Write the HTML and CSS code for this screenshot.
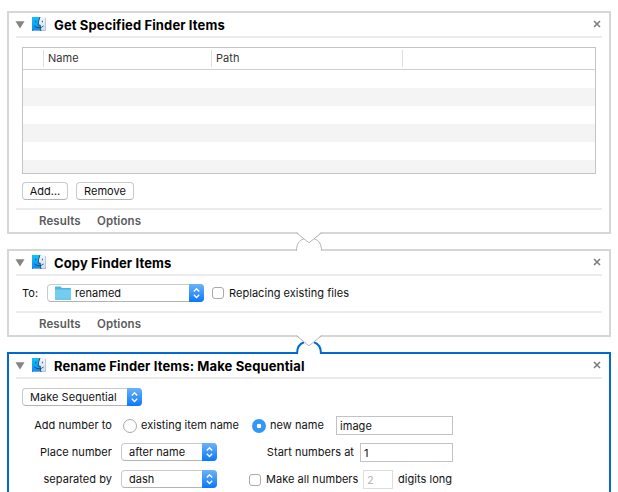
FILE: index.html
```
<!DOCTYPE html>
<html lang="en">
<head>
<meta charset="utf-8">
<title>Workflow</title>
<link rel="stylesheet" href="styles.css">
</head>
<body>
<svg class="defs" width="0" height="0" aria-hidden="true">
  <defs>
    <linearGradient id="face" x1="0" y1="0" x2="0" y2="1"><stop offset="0" stop-color="#10c4fb"/><stop offset="1" stop-color="#1188f0"/></linearGradient>
    <linearGradient id="pale" x1="0" y1="0" x2="0" y2="1"><stop offset="0" stop-color="#f2f5f9"/><stop offset="1" stop-color="#cfdeee"/></linearGradient>
    <symbol id="finder" viewBox="0 0 14 14">
      <rect width="14" height="14" rx=".6" fill="url(#pale)"/>
      <path d="M0 0H8Q6.3 4 6.2 8H8.2Q8.2 11 9 14H0Z" fill="url(#face)"/>
      <path d="M13.5 1V13.5H1" fill="none" stroke="#a9b9cb" stroke-width=".7"/>
      <path d="M8 0Q6.3 4 6.2 8H8.2Q8.2 11 9 14M3.7 3.7V5.3M10.4 3.7V5.3M2.4 9Q7 12.6 11.6 9" fill="none" stroke="#123b65" stroke-width=".8"/>
    </symbol>
    <symbol id="triangle" viewBox="0 0 10 8"><path d="M.5 .2H9.5L5 7.6Z" fill="#858585"/></symbol>
    <symbol id="close" viewBox="0 0 8 8"><path d="M1 1L7 7M7 1L1 7" stroke="#7d7d7d" stroke-width="1.6"/></symbol>
    <symbol id="chevrons" viewBox="0 0 15 18"><path d="M4.8 7.5L7.5 4.8L10.2 7.5M4.8 10.7L7.5 13.4L10.2 10.7" fill="none" stroke="#fff" stroke-width="1.4"/></symbol>
  </defs>
</svg>

<main class="workflow">
  <section class="action action-list">
    <header class="head">
      <svg class="tri"><use href="#triangle"/></svg>
      <svg class="finder"><use href="#finder"/></svg>
      <h2>Get Specified Finder Items</h2>
      <svg class="close"><use href="#close"/></svg>
    </header>
    <div class="table">
      <div class="thead"><span class="c0"></span><span class="c1">Name</span><span class="c1 path">Path</span><span class="c3"></span></div>
      <div class="rows"></div>
    </div>
    <div class="buttons"><span class="button add">Add…</span><span class="button remove">Remove</span></div>
    <footer class="foot"><span class="results">Results</span><span class="options">Options</span></footer>
    <svg class="link" viewBox="0 0 40 24"><path d="M8 0H32L20 11Z" fill="#fff"/><path d="M8 17H32V20H8Z" fill="#fff"/><path d="M7.5 18.5C7.7 12 10 8.2 14.7 7M32.5 18.5C32.3 12 30 8.2 25.3 7M7.5 .8L20 10.8L32.5 .8" fill="none" stroke="#b3b3b3"/></svg>
  </section>

  <section class="action action-copy">
    <header class="head">
      <svg class="tri"><use href="#triangle"/></svg>
      <svg class="finder"><use href="#finder"/></svg>
      <h2>Copy Finder Items</h2>
      <svg class="close"><use href="#close"/></svg>
    </header>
    <div class="copy-row">
      <span class="to">To:</span>
      <span class="popup dest">
        <svg class="folder" viewBox="0 0 16 14"><path d="M0 1.3Q0 .5 .8 .5H5.5L7 2H15.2Q16 2 16 2.8V13.3H0Z" fill="#4fb5dc"/><path d="M0 3.5H16V13H0Z" fill="#71cef0"/><path d="M0 13.3H16" stroke="#4aaed3" stroke-width=".8"/></svg>
        <span class="label">renamed</span><svg class="chev"><use href="#chevrons"/></svg>
      </span>
      <span class="check"></span>
      <span class="replacing">Replacing existing files</span>
    </div>
    <footer class="foot"><span class="results">Results</span><span class="options">Options</span></footer>
    <svg class="link" viewBox="0 0 40 24"><path d="M8 0H32L20 11Z" fill="#fff"/><path d="M9 16.5H31V20H9Z" fill="#fff"/><path d="M8 19C8 12.5 10.5 8.7 15 7.3M32 19C32 12.5 29.5 8.7 25 7.3" fill="none" stroke="#006ad2" stroke-width="2"/><path d="M7.5 .8L20 10.8L32.5 .8" fill="none" stroke="#b3b3b3"/></svg>
  </section>

  <section class="action action-rename">
    <header class="head">
      <svg class="tri"><use href="#triangle"/></svg>
      <svg class="finder"><use href="#finder"/></svg>
      <h2>Rename Finder Items: Make Sequential</h2>
      <svg class="close"><use href="#close"/></svg>
    </header>
    <span class="popup mode"><span class="label">Make Sequential</span><svg class="chev"><use href="#chevrons"/></svg></span>
    <div class="form">
      <div class="row">
        <span class="key">Add number to</span><span class="radio"></span><span class="existing">existing item name</span><span class="radio on"></span><span class="newname">new name</span><span class="field name">image</span>
      </div>
      <div class="row">
        <span class="key">Place number</span><span class="popup small"><span class="label">after name</span><svg class="chev"><use href="#chevrons"/></svg></span><span class="start">Start numbers at</span><span class="field num">1</span>
      </div>
      <div class="row">
        <span class="key">separated by</span><span class="popup small"><span class="label">dash</span><svg class="chev"><use href="#chevrons"/></svg></span><span class="check"></span><span class="makeall">Make all numbers</span><span class="field digits">2</span><span class="long">digits long</span>
      </div>
    </div>
  </section>
</main>
</body>
</html>
```
FILE: styles.css
```
* { box-sizing: border-box; }
body { margin: 0; height: 492px; overflow: hidden; background: #fff; color: #111; font: 11px/18px Inter, "Liberation Sans", sans-serif; letter-spacing: .04px; white-space: nowrap; }
svg { display: block; flex: none; }
.defs { position: absolute; }
.workflow { display: flex; flex-direction: column; gap: 15px; padding: 11px 7px 0; width: 618px; }
.action { position: relative; display: flex; flex-direction: column; align-items: flex-start; width: 604px; border: 2px solid #d6d6d6; padding: 0 7px; flex: none; }
.action-list { height: 223px; }
.action-copy { height: 88px; }
.action-rename { height: 160px; border-color: #006ad2; }
.head { display: flex; align-items: center; width: 586px; height: 25px; border-bottom: 2px solid #ebebeb; flex: none; }
.tri { width: 10px; height: 8px; margin-left: -1px; }
.finder { width: 14px; height: 14px; margin: -1px 0 0 7px; }
h2 { margin: 1px auto 0 8px; font-size: 13px; line-height: 18px; font-weight: 700; letter-spacing: .12px; color: #000; }
.close { width: 8px; height: 8px; margin: -1px 1px 0 0; }
.table { width: 574px; height: 127px; margin: 9px 0 0 6px; border: 1px solid #c4c4c4; display: flex; flex-direction: column; flex: none; }
.thead { display: flex; align-items: center; height: 22px; border-bottom: 1px solid #cfcfcf; color: #333; flex: none; }
.thead span { height: 17px; line-height: 17px; }
.c0 { width: 20px; }
.c1 { width: 168px; padding-left: 4px; border-left: 1px solid #dedede; }
.thead .path { width: 191px; }
.c3 { border-left: 1px solid #dedede; }
.rows { flex: 1; background: repeating-linear-gradient(#fff 0 18px, #f4f4f4 18px 36px); }
.buttons { display: flex; gap: 8px; margin: 8px 0 0 6px; height: 18px; }
.button { height: 18px; line-height: 16px; border: 1px solid #cacaca; border-bottom-color: #b4b4b4; border-radius: 4px; text-align: center; }
.add { width: 46px; }
.remove { width: 58px; }
.foot { display: flex; width: 586px; height: 24px; margin-top: auto; border-top: 2px solid #ebebeb; padding: 2px 0 0 23px; font-size: 11.5px; font-weight: 600; letter-spacing: .1px; color: #5c5c5c; line-height: 18px; }
.results { width: 58px; }
.link { position: absolute; z-index: 2; left: 280px; top: 219px; width: 40px; height: 24px; }
.action-copy .link { top: 84px; }
.copy-row { display: flex; align-items: center; height: 18px; margin: 8px 0 0 6px; }
.to { width: 25px; }
.popup { display: flex; align-items: center; height: 18px; border: 1px solid #cacaca; border-bottom-color: #b4b4b4; border-radius: 4px; padding-left: 7px; flex: none; }
.popup .label { line-height: 16px; }
.chev { width: 15px; height: 18px; margin: -1px -1px -1px auto; border-radius: 0 4px 4px 0; background: linear-gradient(#6bb3fa, #0a78fb); }
.dest { width: 157px; }
.folder { width: 16px; height: 14px; margin-right: 4px; }
.check { width: 12px; height: 12px; border: 1px solid #aaa; border-radius: 3px; flex: none; }
.copy-row .check { margin: 0 5px 0 8px; }
.mode { width: 120px; margin: 9px 0 0 6px; }
.form { display: flex; flex-direction: column; gap: 8px; margin-top: 10px; }
.row { display: flex; align-items: center; height: 19px; }
.key, .existing, .newname, .start, .makeall, .long { padding-bottom: 1px; flex: none; }
.key { width: 96px; text-align: right; }
.radio { width: 14px; height: 14px; border: 1px solid #aaa; border-radius: 50%; margin-left: 11px; flex: none; }
.radio.on { border: 0; margin: 0; background: radial-gradient(circle, #fff 0 2px, #3397f7 2.6px); }
.existing { width: 115px; padding-left: 4px; }
.newname { width: 70px; padding-left: 4px; }
.field { height: 19px; border: 1px solid #c3c3c3; line-height: 18px; padding-left: 3px; flex: none; }
.name { width: 117px; }
.small { width: 96px; margin: 0 0 1px 9px; }
.start { width: 143px; text-align: right; padding-right: 6px; }
.num { width: 93px; }
.row .check { margin-left: 32px; }
.makeall { width: 102px; padding-left: 5px; }
.digits { width: 30px; border-color: #dedede; color: #b4b4b4; }
.long { padding-left: 5px; }
```
